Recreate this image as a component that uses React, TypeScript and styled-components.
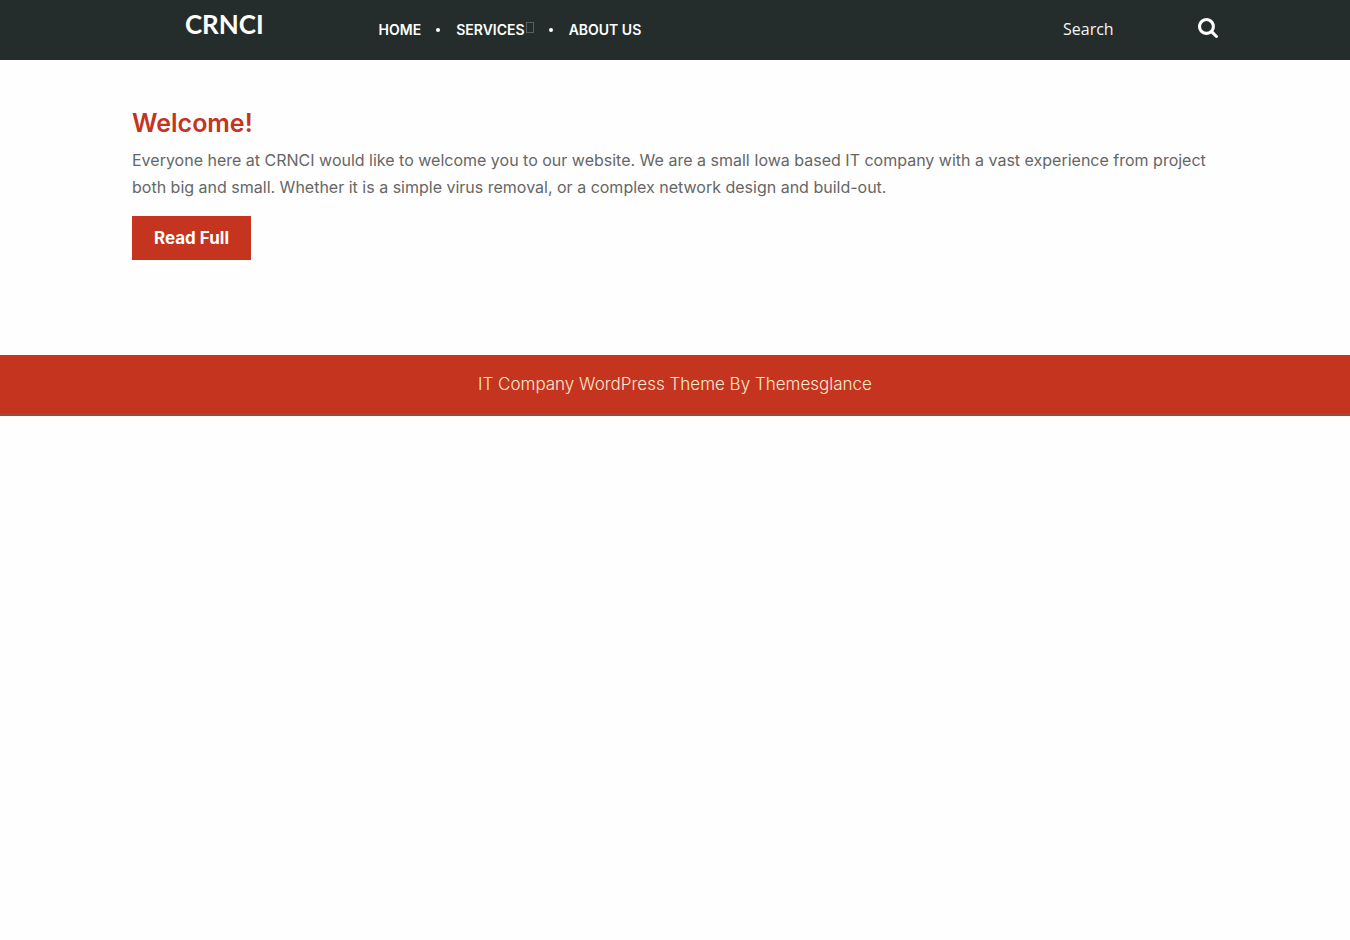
import React from "react";
import styled, { createGlobalStyle } from "styled-components";

const Global = createGlobalStyle`
  * { box-sizing: border-box; }
  body { margin: 0; background: #fefefe; color: #666; font-family: Inter, "Open Sans", sans-serif; font-size: 16px; }
`;

const Header = styled.header`
  background: #242d2b;
`;

const Container = styled.div`
  max-width: 1116px;
  margin: 0 auto;
  padding: 0 15px;
`;

const HeaderRow = styled(Container)`
  display: flex;
  min-height: 60px;
`;

const Brand = styled.h1`
  flex: 0 0 17%;
  margin: 0;
  text-align: center;
  font-family: Lato, sans-serif;
  font-size: 26px;
  font-weight: 700;
  line-height: 48px;

  a { color: #fff; text-decoration: none; }
`;

const Nav = styled.nav`
  display: flex;
  padding-left: 62px;
`;

const Menu = styled.ul`
  display: flex;
  align-items: center;
  margin: 0;
  padding: 0;
  list-style: none;
`;

const MenuItem = styled.li<{ $dot?: boolean }>`
  display: flex;
  align-items: center;
  gap: 16px;

  &::before {
    content: "";
    display: ${(p) => (p.$dot ? "block" : "none")};
    width: 4px;
    height: 4px;
    margin-left: 15px;
    border-radius: 50%;
    background: #fff;
  }
`;

const MenuLink = styled.a`
  display: flex;
  gap: 1px;
  color: #fff;
  font-size: 14px;
  font-weight: 600;
  line-height: 20px;
  text-decoration: none;
  text-transform: uppercase;
`;

const SubmenuMark = styled.span`
  width: 8px;
  height: 11px;
  margin-top: 2px;
  border: 1px solid #56605e;
`;

const SearchForm = styled.form`
  display: flex;
  align-items: center;
  justify-content: space-between;
  width: 155px;
  margin-left: auto;
`;

const SearchInput = styled.input`
  width: 110px;
  padding: 0 0 2px;
  border: 0;
  outline: 0;
  background: transparent;
  color: #fff;
  font-family: "Open Sans", sans-serif;
  font-size: 16px;

  &::placeholder { color: #f4f6f6; opacity: 1; }
`;

const SearchButton = styled.button`
  display: flex;
  padding: 0 0 4px;
  border: 0;
  background: transparent;
  color: #fff;
  cursor: pointer;
`;

const Main = styled.main`
  padding: 45px 0 95px;
`;

const Title = styled.h2`
  margin: 0 0 6px;
  color: #c4341f;
  font-size: 25px;
  font-weight: 600;
  line-height: 36px;
`;

const Text = styled.p`
  margin: 0 0 15px;
  font-size: 16px;
  line-height: 27px;
`;

const ReadMore = styled.a`
  display: inline-block;
  padding: 10px 22px;
  background: #c5341e;
  color: #fff;
  font-size: 17px;
  font-weight: 700;
  line-height: 24px;
  text-decoration: none;
  vertical-align: top;
`;

const Footer = styled.footer`
  padding: 17px 0;
  border-bottom: 3px solid #9b4a3b;
  background: #c5341e;
  text-align: center;
  font-size: 17px;
  line-height: 24px;

  a { color: #fbe9d0; font-weight: 300; text-decoration: none; }
`;

export default function App() {
  return (
    <>
      <Global />
      <Header>
        <HeaderRow>
          <Brand><a href="#">CRNCI</a></Brand>
          <Nav>
            <Menu>
              <MenuItem><MenuLink href="#">Home</MenuLink></MenuItem>
              <MenuItem $dot><MenuLink href="#">Services<SubmenuMark /></MenuLink></MenuItem>
              <MenuItem $dot><MenuLink href="#">About Us</MenuLink></MenuItem>
            </Menu>
          </Nav>
          <SearchForm role="search">
            <SearchInput type="search" placeholder="Search" aria-label="Search" />
            <SearchButton type="submit" aria-label="Submit search">
              <svg width="20" height="20" viewBox="0 0 1664 1664" fill="currentColor" aria-hidden="true">
                <path d="M1152 704q0-185-131.500-316.500T704 256 387.500 387.500 256 704t131.500 316.500T704 1152t316.500-131.500T1152 704zm512 832q0 52-38 90t-90 38q-54 0-90-38l-343-342q-179 124-399 124-143 0-273.500-55.500t-225-150-150-225T0 704t55.500-273.500 150-225 225-150T704 0t273.500 55.500 225 150 150 225T1408 704q0 220-124 399l343 343q37 37 37 90z" />
              </svg>
            </SearchButton>
          </SearchForm>
        </HeaderRow>
      </Header>
      <Main>
        <Container>
          <Title>Welcome!</Title>
          <Text>
            Everyone here at CRNCI would like to welcome you to our website. We are a small Iowa based IT company with a vast experience from project both big and small. Whether it is a simple virus removal, or a complex network design and build-out.
          </Text>
          <ReadMore href="#">Read Full</ReadMore>
        </Container>
      </Main>
      <Footer><a href="#">IT Company WordPress Theme By Themesglance</a></Footer>
    </>
  );
}
